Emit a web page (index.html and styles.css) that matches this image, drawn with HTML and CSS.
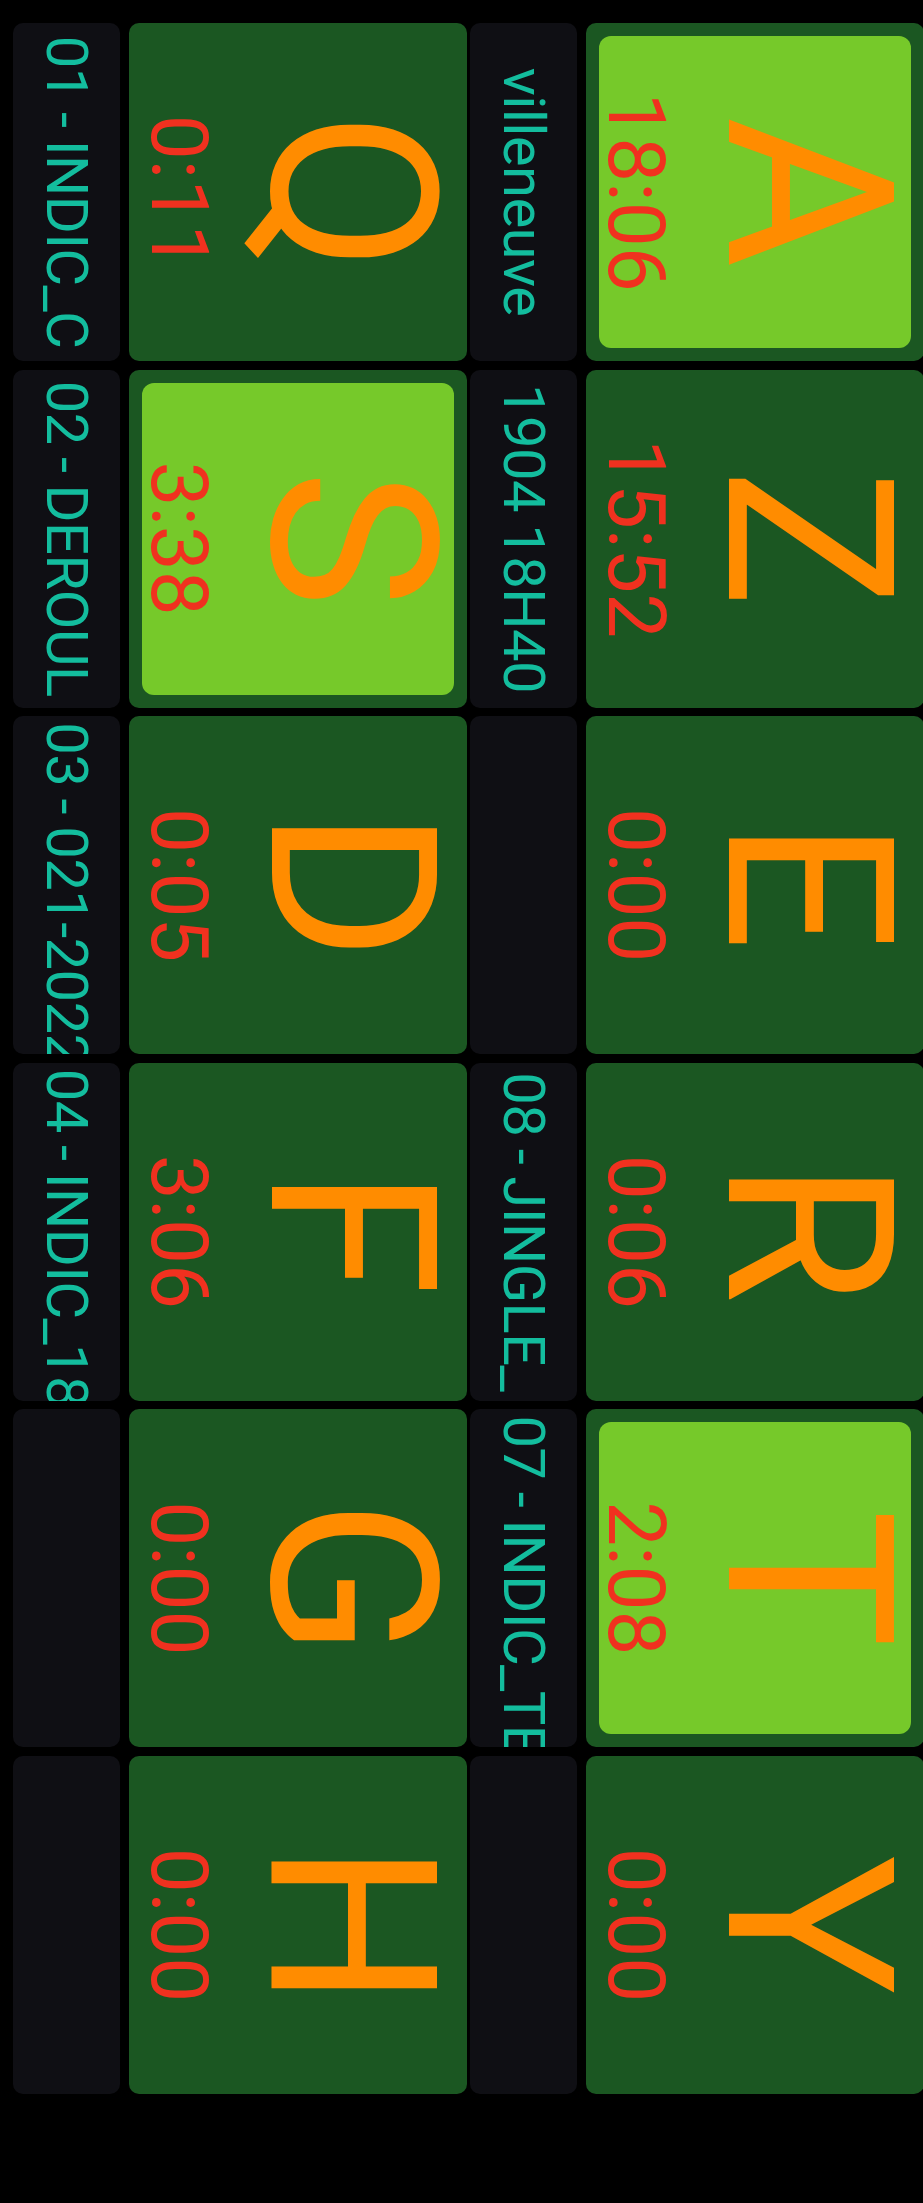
FILE: index.html
```html
<!DOCTYPE html>
<html lang="fr">
<head>
<meta charset="utf-8">
<title>Pads</title>
<link rel="stylesheet" href="styles.css">
</head>
<body>
<div class="screen">
  <div class="stage">
    <div class="band band-pads band-top">
      <div class="pad active"><div class="face"><span class="key">A</span><span class="time">18:06</span></div></div>
      <div class="pad"><div class="face"><span class="key">Z</span><span class="time">15:52</span></div></div>
      <div class="pad"><div class="face"><span class="key">E</span><span class="time">0:00</span></div></div>
      <div class="pad"><div class="face"><span class="key">R</span><span class="time">0:06</span></div></div>
      <div class="pad active"><div class="face"><span class="key">T</span><span class="time">2:08</span></div></div>
      <div class="pad"><div class="face"><span class="key">Y</span><span class="time">0:00</span></div></div>
    </div>
    <div class="band band-labels">
      <div class="label">villeneuve</div>
      <div class="label">1904 18H40</div>
      <div class="label"></div>
      <div class="label">08 - JINGLE_</div>
      <div class="label">07 - INDIC_TE</div>
      <div class="label"></div>
    </div>
    <div class="band band-pads band-second">
      <div class="pad"><div class="face"><span class="key">Q</span><span class="time">0:11</span></div></div>
      <div class="pad active"><div class="face"><span class="key">S</span><span class="time">3:38</span></div></div>
      <div class="pad"><div class="face"><span class="key">D</span><span class="time">0:05</span></div></div>
      <div class="pad"><div class="face"><span class="key">F</span><span class="time">3:06</span></div></div>
      <div class="pad"><div class="face"><span class="key">G</span><span class="time">0:00</span></div></div>
      <div class="pad"><div class="face"><span class="key">H</span><span class="time">0:00</span></div></div>
    </div>
    <div class="band band-labels">
      <div class="label">01 - INDIC_C</div>
      <div class="label">02 - DEROUL</div>
      <div class="label">03 - 021-2022</div>
      <div class="label">04 - INDIC_18</div>
      <div class="label"></div>
      <div class="label"></div>
    </div>
  </div>
</div>
</body>
</html>
```
FILE: styles.css
```css
html, body {
  margin: 0;
  padding: 0;
  background: #000;
}

.screen {
  width: 923px;
  height: 2203px;
  overflow: hidden;
  background: #000;
}

/* The app is drawn in landscape and the capture is rotated a quarter turn clockwise */
.stage {
  width: 2203px;
  height: 923px;
  box-sizing: border-box;
  padding-left: 23px;
  display: flex;
  flex-direction: column;
  transform-origin: 0 0;
  transform: translateX(923px) rotate(90deg);
  font-family: Roboto, "Noto Sans", sans-serif;
}

.band {
  display: flex;
  gap: 8.6px;
  flex: none;
}

.band-pads {
  height: 338px;
}

.band-top {
  margin-top: -1px;
}

.band-labels {
  height: 107px;
  margin-top: 9px;
}

.band-second {
  margin-top: 3px;
}

.pad {
  width: 338px;
  height: 338px;
  flex: none;
  box-sizing: border-box;
  padding: 13px;
  background: #1b5722;
  border-radius: 10px;
  display: flex;
}

.face {
  flex: 1;
  border-radius: 12px;
  display: flex;
  flex-direction: column;
  align-items: center;
  justify-content: center;
  gap: 15.5px;
  padding-bottom: 10.5px;
}

.pad.active .face {
  background: #76c92a;
}

.key {
  font-size: 232px;
  line-height: 232px;
  font-weight: 400;
  color: #ff8c00;
}

.time {
  font-size: 80px;
  line-height: 80px;
  font-weight: 400;
  color: #f0311f;
}

.label {
  width: 338px;
  height: 107px;
  flex: none;
  box-sizing: border-box;
  padding: 0 6px;
  background: #0f0f14;
  border-radius: 10px;
  overflow: hidden;
  white-space: nowrap;
  text-align: center;
  font-size: 58px;
  line-height: 107px;
  letter-spacing: -0.6px;
  word-spacing: -1.5px;
  color: #13bd9e;
}
```
